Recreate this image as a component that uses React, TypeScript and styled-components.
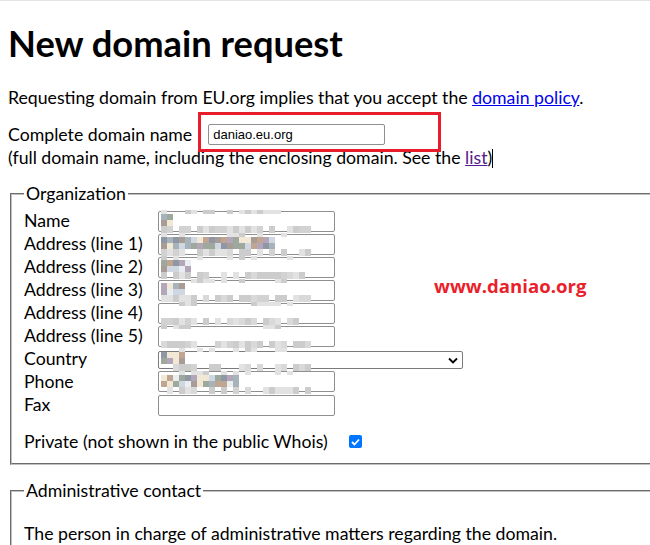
import React from 'react';
import styled, { createGlobalStyle } from 'styled-components';

const Global = createGlobalStyle`
  html, body { margin: 0; padding: 0; overflow: hidden; background: #fff; }
  body { font-family: "Lato", "Noto Sans", sans-serif; font-size: 17.7px; color: #000; }
`;

const Page = styled.div`
  border-top: 1px solid #e3e3e3;
  padding: 0 8px;
  width: 720px;
  position: relative;
`;

const Title = styled.h1`
  font-size: 36.3px;
  font-weight: 700;
  margin: 21px 0 22px;
  line-height: 42px;
`;

const Para = styled.p`
  margin: 0;
  line-height: 23px;
`;

const Link = styled.a<{ $visited?: boolean }>`
  color: ${p => (p.$visited ? '#551a8b' : '#0000ee')};
  text-decoration: underline;
`;

const DomainBlock = styled.div`
  line-height: 23px;
  margin: 14px 0 13px;
`;

const DomainLine = styled.div`
  display: flex;
  align-items: center;
  gap: 16px;
  height: 23px;
`;

const Highlight = styled.span`
  position: relative;
  display: inline-flex;
  &::after {
    content: '';
    position: absolute;
    left: -10px;
    top: -12px;
    width: 243px;
    height: 40px;
    border: 3px solid #e81c2a;
    box-sizing: border-box;
  }
`;

const TextInput = styled.input`
  box-sizing: border-box;
  width: 177px;
  height: 21px;
  margin: 0;
  border: 1px solid #8f8f8f;
  border-radius: 2px;
  padding: 0 4px;
  font-family: "Liberation Sans", Arial, sans-serif;
  font-size: 13px;
  background: #fff;
  color: #000;
`;

const Caret = styled.span`
  display: inline-block;
  width: 1px;
  height: 19px;
  background: #000;
  vertical-align: -4px;
`;

const Fieldset = styled.fieldset`
  margin: 0 2px;
  padding: 0 12px 10px;
  border: 2px groove #c0c0c0;
  border-right: none;
`;

const Legend = styled.legend`
  padding: 0 2px;
  line-height: 23px;
`;

const Rows = styled.div`
  display: grid;
  grid-template-columns: 134px 1fr;
  grid-auto-rows: 23px;
  margin-top: 4px;
`;

const Label = styled.div`
  line-height: 23px;
  white-space: nowrap;
`;

const Field = styled.div<{ $offset: number }>`
  position: relative;
  display: flex;
  flex-direction: column;
  align-items: flex-start;
  padding-top: ${p => p.$offset}px;
`;

const SelectBox = styled.div`
  box-sizing: border-box;
  flex: none;
  width: 305px;
  height: 18px;
  border: 1px solid #7a7a7a;
  border-radius: 2px;
  display: flex;
  align-items: center;
  justify-content: flex-end;
  padding-right: 4px;
  background: #fff;
`;

const Mosaic = styled.div`
  position: absolute;
  left: 3px;
  top: 1px;
  display: grid;
  grid-template-columns: repeat(25, 6px);
  grid-template-rows: 4px 6px 6px 7px;
  pointer-events: none;
`;

const Cell = styled.span<{ $c: string }>`
  background: ${p => p.$c};
`;

const PrivateRow = styled.div`
  display: flex;
  align-items: center;
  margin-top: 14px;
  line-height: 23px;
`;

const Check = styled.span`
  margin-left: 21px;
  width: 13px;
  height: 13px;
  border-radius: 2px;
  background: #0075ff;
  display: inline-flex;
  align-items: center;
  justify-content: center;
`;

const Watermark = styled.div`
  position: absolute;
  left: 434px;
  top: 272px;
  font-family: "Open Sans", "Noto Sans", sans-serif;
  font-weight: 700;
  font-size: 18.6px;
  color: #ea1f2c;
`;

const Second = styled(Fieldset)`
  margin-top: 14px;
`;

const SecondText = styled(Para)`
  margin-top: 20px;
`;

const greys = ['#d2d2d2', '#d9d9d9', '#cccccc', '#e2e2e2'];
const tints = ['#c0a592', '#b4a6b9', '#a7b3ba', '#cfd8e2', '#f1e8d6', '#9fa89c', '#a99b95', '#e9eef3', '#8e97a3'];

function makeMosaic(seed: number, colored: number): string[] {
  const out: string[] = [];
  let s = seed * 131;
  const rnd = () => {
    s = (s * 9301 + 49297) % 233280;
    return s / 233280;
  };
  for (let row = 0; row < 4; row++) {
    for (let col = 0; col < 25; col++) {
      const r = rnd();
      if (row === 0) out.push(col < 22 && r > 0.6 ? greys[Math.floor(r * 4) % 4] : 'transparent');
      else if (row === 1 || row === 2) {
        if (col < colored) out.push(tints[Math.floor(r * tints.length)]);
        else out.push('transparent');
      } else out.push(r > 0.3 ? greys[Math.floor(r * 7) % 4] : 'transparent');
    }
  }
  return out;
}

type Row = { label: string; seed: number; colored: number; offset: number; select?: boolean; blank?: boolean };

const rows: Row[] = [
  { label: 'Name', seed: 3, colored: 2, offset: 2 },
  { label: 'Address (line 1)', seed: 7, colored: 19, offset: 2 },
  { label: 'Address (line 2)', seed: 11, colored: 5, offset: 2 },
  { label: 'Address (line 3)', seed: 17, colored: 4, offset: 2 },
  { label: 'Address (line 4)', seed: 23, colored: 0, offset: 2 },
  { label: 'Address (line 5)', seed: 29, colored: 0, offset: 2 },
  { label: 'Country', seed: 31, colored: 4, offset: 4, select: true },
  { label: 'Phone', seed: 37, colored: 13, offset: 1 },
  { label: 'Fax', seed: 41, colored: 0, offset: 2, blank: true },
];

const Chevron = () => (
  <svg width="10" height="7" viewBox="0 0 10 7">
    <path d="M1 1.5 L5 5.5 L9 1.5" fill="none" stroke="#000" strokeWidth="1.8" />
  </svg>
);

export default function App() {
  return (
    <Page>
      <Global />
      <Title>New domain request</Title>
      <Para>
        Requesting domain from EU.org implies that you accept the <Link href="#">domain policy</Link>.
      </Para>
      <DomainBlock>
        <DomainLine>
          <span>Complete domain name</span>
          <Highlight>
            <TextInput defaultValue="daniao.eu.org" />
          </Highlight>
        </DomainLine>
        <div>
          (full domain name, including the enclosing domain. See the <Link href="#" $visited>list</Link>)<Caret />
        </div>
      </DomainBlock>
      <Fieldset>
        <Legend>Organization</Legend>
        <Rows>
          {rows.map(r => (
            <React.Fragment key={r.label}>
              <Label>{r.label}</Label>
              <Field $offset={r.offset}>
                {r.select ? (
                  <SelectBox>
                    <Chevron />
                  </SelectBox>
                ) : (
                  <TextInput />
                )}
                {!r.blank && (
                  <Mosaic>
                    {makeMosaic(r.seed, r.colored).map((c, i) => (
                      <Cell key={i} $c={c} />
                    ))}
                  </Mosaic>
                )}
              </Field>
            </React.Fragment>
          ))}
        </Rows>
        <PrivateRow>
          <span>Private (not shown in the public Whois)</span>
          <Check>
            <svg width="9" height="8" viewBox="0 0 9 8">
              <path d="M1 4 L3.5 6.5 L8 1.5" fill="none" stroke="#fff" strokeWidth="1.8" />
            </svg>
          </Check>
        </PrivateRow>
      </Fieldset>
      <Second>
        <Legend>Administrative contact</Legend>
        <SecondText>The person in charge of administrative matters regarding the domain.</SecondText>
      </Second>
      <Watermark>www.daniao.org</Watermark>
    </Page>
  );
}
